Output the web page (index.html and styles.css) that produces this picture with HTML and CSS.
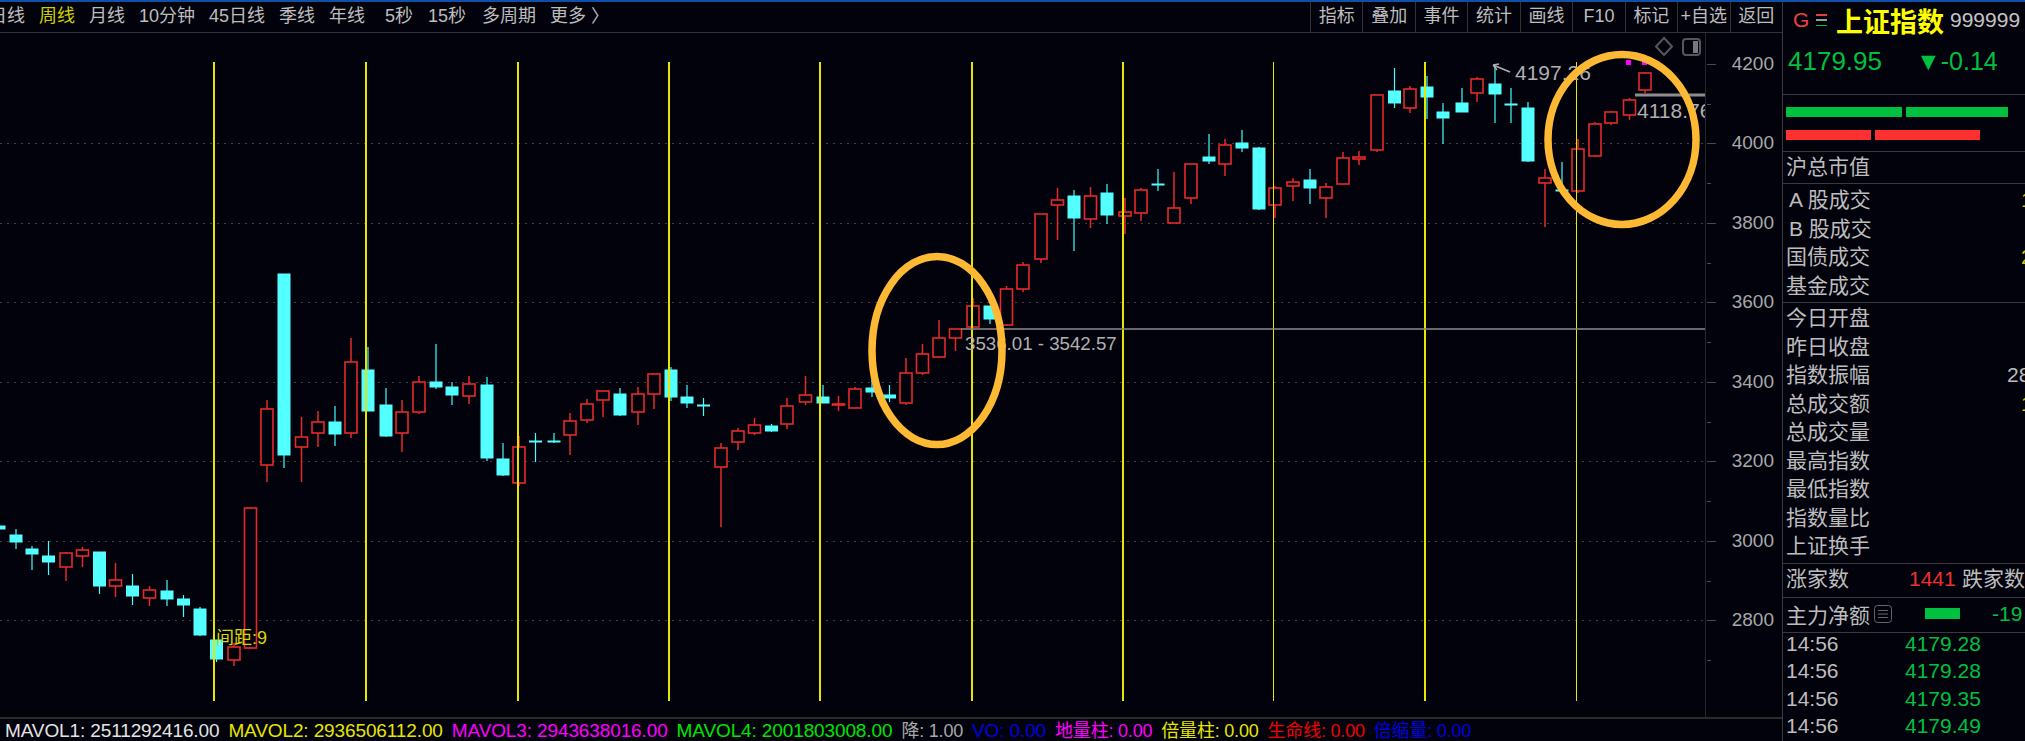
FILE: index.html
```html
<!DOCTYPE html>
<html lang="zh-CN">
<head>
    <meta charset="UTF-8">
    <title>上证指数 周线</title>
    <link rel="stylesheet" href="styles.css">
</head>
<body>
    <div class="main">
        <div class="toolbar">
            <div class="tabs">
                <span class="tab">日线</span>
                <span class="tab active">周线</span>
                <span class="tab">月线</span>
                <span class="tab">10分钟</span>
                <span class="tab">45日线</span>
                <span class="tab">季线</span>
                <span class="tab">年线</span>
                <span class="tab sec-five">5秒</span>
                <span class="tab wide">15秒</span>
                <span class="tab">多周期</span>
                <span class="tab">更多 〉</span>
            </div>
            <div class="tools">
                <span class="tool">指标</span>
                <span class="tool">叠加</span>
                <span class="tool">事件</span>
                <span class="tool">统计</span>
                <span class="tool">画线</span>
                <span class="tool">F10</span>
                <span class="tool">标记</span>
                <span class="tool">+自选</span>
                <span class="tool">返回</span>
            </div>
        </div>

        <svg class="chart" viewBox="0 33 1782 684" xmlns="http://www.w3.org/2000/svg">
            <g id="grid"></g>
            <g id="candles"></g>
            <g id="marks"></g>

            <rect class="dot" x="1626" y="60" width="5" height="5"/>
            <rect class="dot" x="1642" y="60" width="5" height="5"/>
            <path class="note-line" d="M1510 72 L1493 65 M1493 65 L1499 64 M1493 65 L1497 70"/>
            <text class="note" x="1515" y="80">4197.26</text>
            <path class="hi-line" d="M1635 95 H1705"/>
            <svg x="1637" y="98" width="68" height="28"><text class="note" x="0" y="20">4118.76</text></svg>
            <path class="range-line" d="M961 329 H1705"/>
            <text class="note small" x="965" y="350">3536.01 - 3542.57</text>
            <text class="gap-label" x="216" y="644">间距:9</text>

            <ellipse class="ring" cx="937" cy="350.5" rx="65" ry="94"/>
            <ellipse class="ring" cx="1622" cy="139.5" rx="74" ry="85"/>

            <path class="icon-line" d="M1664 38 L1672 46.500 L1664 55 L1656 46.500 Z"/>
            <rect class="icon-line" x="1683" y="39" width="17" height="16" rx="3"/>
            <rect class="icon-fill" x="1693" y="41" width="5" height="12"/>
        </svg>

        <div class="status">
            <span class="white">MAVOL1: 2511292416.00</span>
            <span class="yellow">MAVOL2: 2936506112.00</span>
            <span class="magenta">MAVOL3: 2943638016.00</span>
            <span class="lime">MAVOL4: 2001803008.00</span>
            <span class="gray cn">降: 1.00</span>
            <span class="blue">VO: 0.00</span>
            <span class="magenta cn">地量柱: 0.00</span>
            <span class="yellow cn">倍量柱: 0.00</span>
            <span class="red cn">生命线: 0.00</span>
            <span class="blue cn">倍缩量: 0.00</span>
        </div>
    </div>

    <div class="side">
        <div class="quote">
            <div class="title-row">
                <span class="g-mark">G</span>
                <span class="bars-mark"><i></i><i></i><i></i></span>
                <span class="name">上证指数</span>
                <span class="code">999999</span>
            </div>
            <div class="price-row">
                <span class="price">4179.95</span>
                <span class="change">▼-0.14</span>
            </div>
        </div>

        <div class="meter">
            <div class="meter-row">
                <i class="green-bar first"></i>
                <i class="green-bar second"></i>
            </div>
            <div class="meter-row">
                <i class="red-bar first"></i>
                <i class="red-bar second"></i>
            </div>
        </div>

        <div class="section cap">沪总市值</div>

        <div class="section block-a">
            <div class="row"><span class="indent">A 股成交</span><span class="val far">1</span></div>
            <div class="row"><span class="indent">B 股成交</span></div>
            <div class="row"><span>国债成交</span><span class="val far">2</span></div>
            <div class="row"><span>基金成交</span></div>
        </div>

        <div class="section block-b">
            <div class="row"><span>今日开盘</span></div>
            <div class="row"><span>昨日收盘</span></div>
            <div class="row"><span>指数振幅</span><span class="val near">28</span></div>
            <div class="row"><span>总成交额</span><span class="val far">1</span></div>
            <div class="row"><span>总成交量</span></div>
            <div class="row"><span>最高指数</span></div>
            <div class="row"><span>最低指数</span></div>
            <div class="row"><span>指数量比</span></div>
            <div class="row"><span>上证换手</span></div>
        </div>

        <div class="section breadth">
            <span class="breadth-label">涨家数</span>
            <span class="up-count">1441</span>
            <span>跌家数</span>
        </div>

        <div class="section flow">
            <span>主力净额</span>
            <svg class="list-icon" viewBox="0 0 18 18" xmlns="http://www.w3.org/2000/svg">
                <rect x="0.5" y="0.5" width="17" height="17" rx="3"/>
                <path d="M4 5.500 H14 M4 9 H14 M4 12.500 H14"/>
            </svg>
            <i class="flow-bar"></i>
            <span class="flow-val">-19</span>
        </div>

        <div class="ticks">
            <div class="tick"><span class="time">14:56</span><span class="tick-price">4179.28</span></div>
            <div class="tick"><span class="time">14:56</span><span class="tick-price">4179.28</span></div>
            <div class="tick"><span class="time">14:56</span><span class="tick-price">4179.35</span></div>
            <div class="tick"><span class="time">14:56</span><span class="tick-price">4179.49</span></div>
        </div>
    </div>

    <script src="chart.js"></script>
</body>
</html>
```

FILE: styles.css
```css
html, body {
    height: 100%;
}

body {
    margin: 0;
    display: flex;
    height: 741px;
    overflow: hidden;
    background: #02020c;
    border-top: 2px solid #0f4fa8;
    box-sizing: border-box;
    color: #bdbdbd;
    font-family: "Liberation Sans", "Noto Sans CJK SC", sans-serif;
}

/* left part: toolbar, chart, status line */
.main {
    flex: 0 0 1782px;
    width: 1782px;
    display: flex;
    flex-direction: column;
    overflow: hidden;
}

.toolbar {
    flex: 0 0 30px;
    display: flex;
    justify-content: space-between;
    border-bottom: 1px solid #333;
    font-size: 18px;
    line-height: 28px;
}

.tabs {
    display: flex;
    margin-left: -18px;
    white-space: nowrap;
}

.tab {
    padding: 0 7px;
}

.tab.sec-five {
    padding: 0 6px 0 13px;
}

.tab.wide {
    padding: 0 9px;
}

.tab.active {
    color: #cfcf00;
}

.tools {
    display: grid;
    grid-template-columns: repeat(9, 1fr);
    width: 472px;
}

.tool {
    border-left: 1px solid #333;
    text-align: center;
    white-space: nowrap;
}

.chart {
    display: block;
    flex: 0 0 684px;
    width: 1782px;
    height: 684px;
}

.status {
    flex: 1;
    display: flex;
    gap: 9px;
    padding-left: 5px;
    border-top: 2px solid #2a2a2a;
    font-size: 19px;
    line-height: 24px;
    letter-spacing: -0.12px;
    white-space: nowrap;
}

.status .cn {
    font-size: 18px;
    letter-spacing: -0.2px;
}

.white { color: #e4e4e4; }
.yellow { color: #e6e600; }
.magenta { color: #ff00ff; }
.lime { color: #00e600; }
.gray { color: #a8a8a8; }
.blue { color: #0000e0; }
.red { color: #f00000; }

/* chart parts */
.grid-line {
    stroke: #404040;
    stroke-width: 1;
    stroke-dasharray: 2 5;
}

.axis-line {
    stroke: #26262c;
    stroke-width: 1;
}

.axis-tick {
    stroke: #4a4a4a;
    stroke-width: 1;
}

.axis-label {
    fill: #a8a8a8;
    font-size: 19px;
    text-anchor: end;
}

.wick-up { stroke: #e62a2a; stroke-width: 1.500; }
.wick-down { stroke: #4ff; stroke-width: 1.200; }

.body-up {
    fill: #02020c;
    stroke: #e62a2a;
    stroke-width: 1.600;
}

.body-down { fill: #54ffff; }

.cycle-line { stroke: #e6e600; }

.note {
    fill: #b0b0b0;
    font-size: 21px;
}

.note.small {
    font-size: 18.700px;
}

.note-line {
    fill: none;
    stroke: #b0b0b0;
    stroke-width: 1.500;
}

.hi-line {
    stroke: #8c8c8c;
    stroke-width: 3;
}

.range-line {
    stroke: #8c8c8c;
    stroke-width: 1.500;
}

.gap-label {
    fill: #d8d800;
    font-size: 18px;
}

.ring {
    fill: none;
    stroke: #fdb933;
    stroke-width: 7.500;
}

.dot { fill: #ff00ff; }

.icon-line {
    fill: none;
    stroke: #55555a;
    stroke-width: 2;
}

.icon-fill { fill: #77777c; }

/* right quote panel */
.side {
    flex: 1;
    min-width: 0;
    border-left: 1px solid #3a3a3a;
    overflow: hidden;
    font-size: 21px;
}

.quote {
    height: 93px;
    box-sizing: border-box;
    padding-left: 3px;
    border-bottom: 1px solid #3a3a3a;
}

.title-row {
    display: flex;
    align-items: center;
    height: 36px;
    white-space: nowrap;
}

.g-mark {
    margin-left: 7px;
    width: 23px;
    color: #f04040;
    font-size: 21px;
}

.bars-mark {
    display: flex;
    flex-direction: column;
    justify-content: space-between;
    width: 11px;
    height: 12px;
    margin-right: 9px;
}

.bars-mark i {
    display: block;
    height: 1.500px;
    background: #999;
}

.bars-mark i:first-child { background: #e04040; }
.bars-mark i:last-child { background: #00c040; }

.name {
    width: 114px;
    color: #ffff00;
    font-size: 27px;
    font-weight: bold;
}

.code {
    font-size: 21px;
    color: #c4c4c4;
}

.price-row {
    display: flex;
    align-items: center;
    height: 46px;
    padding-left: 2px;
    color: #00c040;
    white-space: nowrap;
}

.price {
    width: 128px;
    font-size: 26px;
}

.change {
    font-size: 25px;
}

.meter {
    height: 57px;
    box-sizing: border-box;
    padding: 12px 0 0 3px;
    border-bottom: 1px solid #3a3a3a;
}

.meter-row {
    display: flex;
    gap: 4px;
    height: 10px;
    margin-bottom: 13px;
}

.green-bar { background: #00c040; }
.red-bar { background: #ff3030; }

.green-bar.first { width: 116px; }
.green-bar.second { width: 102px; }
.red-bar.first { width: 85px; }
.red-bar.second { width: 105px; }

.section {
    box-sizing: border-box;
    padding-left: 3px;
    border-bottom: 1px solid #3a3a3a;
    white-space: nowrap;
}

.cap {
    height: 32px;
    line-height: 30px;
}

.block-a {
    height: 119px;
    padding-top: 1px;
}

.block-b {
    height: 261px;
}

.row {
    position: relative;
    height: 28.500px;
    line-height: 29px;
}

.indent {
    padding-left: 3px;
}

.val {
    position: absolute;
    top: 0;
}

.val.far {
    left: 235px;
    color: #c8c800;
}

.val.near {
    left: 221px;
}

.breadth {
    display: flex;
    height: 34px;
    line-height: 29px;
}

.breadth-label {
    width: 123px;
}

.up-count {
    width: 53px;
    color: #f03030;
}

.flow {
    display: flex;
    align-items: center;
    height: 35px;
    padding-bottom: 3px;
}

.list-icon {
    width: 18px;
    height: 18px;
    margin-left: 4px;
    fill: none;
    stroke: #66666a;
}

.flow-bar {
    width: 35px;
    height: 11px;
    margin-left: 33px;
    background: #00c040;
}

.flow-val {
    margin-left: 32px;
    color: #00c040;
}

.ticks {
    margin-top: -2px;
    padding-left: 3px;
}

.tick {
    display: flex;
    height: 27.300px;
    line-height: 26px;
}

.time {
    width: 119px;
}

.tick-price {
    color: #00c040;
}
```

FILE: chart.js
```js
// x, high, low, bodyTop, bodyBottom, type
const CANDLES = [
    [-1,526,529,526,529,'d'],[16,529,549,535,542,'d'],[32,546,570,549,554,'d'],[48.5,541,575,556,562,'d'],
    [66,552,581,553,567,'u'],[82.5,547,567,550,556,'u'],[99.5,552,594,552,586,'d'],[115.5,563,597,580,586,'u'],
    [132.5,574,605,586,596,'d'],[149.5,586,606,590,598,'u'],[167,580,606,591,599,'d'],[183.5,595,617,599,605,'d'],
    [200,607,636,609,635,'d'],[216.5,640,662,640,659,'d'],[234,643,666,647,660,'u'],[250.5,507,649,508,648,'u'],
    [267,400,482,409,465,'u'],[284,274,468,274,455,'d'],[301.5,417,482,437,447,'u'],[318,411,447,422,433,'u'],
    [335,406,446,422,434,'d'],[351,338,438,362,433,'u'],[368,347,411,370,411,'d'],[386,388,437,405,436,'d'],
    [402,400,452,412,433,'u'],[419,376,414,382,412,'u'],[436,344,389,382,387,'d'],[452,382,405,387,395,'d'],
    [469,376,404,384,396,'u'],[487,377,461,385,458,'d'],[503,443,476,459,475,'d'],[519,436,486,447,483,'u'],
    [535.5,433,462,441,442,'d'],[554,433,443,441,442,'d'],[570,413,455,421,435,'u'],[587,399,423,404,420,'u'],
    [603,391,417,391,400,'u'],[620,388,416,394,415,'d'],[638,387,425,394,412,'u'],[654,374,409,374,394,'u'],
    [671,367,401,370,397,'d'],[687,385,408,397,403,'d'],[703.5,398,416,405,406,'d'],[721,443,527,448,467,'u'],
    [738,428,450,431,442,'u'],[754.5,418,435,425,433,'u'],[771.5,424,432,426,431,'d'],[787,398,429,406,424,'u'],
    [805.5,376,405,395,402,'u'],[823,385,403,397,403,'d'],[838.5,396,411,404,405,'u'],[855,387,408,389,408,'u'],
    [872,380,397,388,392,'d'],[889.5,385,402,395,398,'d'],[906,358,405,373,403,'u'],[922.5,344,375,354,373,'u'],
    [939,320,358,338,357,'u'],[955.5,329,351,329,338,'u'],[973,298,327,306,327,'u'],[990,306,324,306,319,'d'],
    [1006.5,286,326,289,325,'u'],[1023,262,292,265,289,'u'],[1041,214,263,214,259,'u'],[1057.5,188,240,200,205,'u'],
    [1074,190,251,196,218,'d'],[1090.5,187,228,196,219,'u'],[1107,184,224,193,215,'d'],[1125,198,234,212,216,'u'],
    [1141,188,221,190,213,'u'],[1158,169,191,184,185,'d'],[1174,172,223,208,223,'u'],[1191,164,204,164,198,'u'],
    [1209,134,164,157,161,'d'],[1225,139,176,145,164,'u'],[1242,130,152,143,148,'d'],[1259,147,210,148,209,'d'],
    [1275,186,218,188,205,'u'],[1293,178,201,182,186,'u'],[1310,169,204,180,188,'d'],[1326,183,218,187,198,'u'],
    [1343,152,184,158,184,'u'],[1359,151,165,157,159,'u'],[1377,95,152,95,150,'u'],[1394.5,68,108,91,103,'d'],
    [1410,86,113,89,108,'u'],[1427,76,119,87,97,'d'],[1443,103,144,112,118,'d'],[1462,88,112,103,112,'d'],
    [1477,77,102,79,93,'u'],[1495,67,123,84,94,'d'],[1511,88,123,104,105,'d'],[1528,102,162,108,161,'d'],
    [1545,169,227,178,183,'u'],[1562,162,192,190,191,'d'],[1578,139,193,149,191,'u'],[1595,122,157,124,156,'u'],
    [1611,111,125,112,123,'u'],[1629.5,98,120,100,115,'u'],[1645,72,93,73,90,'u']
];

const CYCLE_LINES = [[214,2],[366,2],[518,2],[669,2],[820,2],[972,2],[1123,2],[1273.5,1],[1425,2],[1576.5,1]];
const PRICE_LABELS = [4200,4000,3800,3600,3400,3200,3000,2800];
const SVG_NS = 'http://www.w3.org/2000/svg';

function add(parent, tag, attrs, text) {
    const el = document.createElementNS(SVG_NS, tag);
    for (const key in attrs) el.setAttribute(key, attrs[key]);
    if (text) el.textContent = text;
    parent.appendChild(el);
    return el;
}

function priceY(price) {
    return 63.5 + (4200 - price) * 0.3975;
}

const grid = document.getElementById('grid');
add(grid, 'line', { class: 'axis-line', x1: 1705.5, x2: 1705.5, y1: 33, y2: 717 });

PRICE_LABELS.forEach(price => {
    const y = Math.round(priceY(price)) + 0.5;
    if (price < 4200) add(grid, 'line', { class: 'grid-line', x1: 0, x2: 1705, y1: y, y2: y });
    add(grid, 'line', { class: 'axis-tick', x1: 1707, x2: 1716, y1: y, y2: y });
    add(grid, 'line', { class: 'axis-tick', x1: 1707, x2: 1711, y1: y + 40, y2: y + 40 });
    add(grid, 'text', { class: 'axis-label', x: 1774, y: y + 5 }, String(price));
});

const candles = document.getElementById('candles');
CANDLES.forEach(([x, high, low, top, bottom, type]) => {
    const up = type === 'u';
    add(candles, 'line', { class: up ? 'wick-up' : 'wick-down', x1: x, x2: x, y1: high, y2: low });
    if (up) {
        add(candles, 'rect', { class: 'body-up', x: x - 6, y: top, width: 12, height: bottom - top });
    } else {
        add(candles, 'rect', { class: 'body-down', x: x - 6.5, y: top - 0.5, width: 13, height: bottom - top + 1 });
    }
});

const marks = document.getElementById('marks');
CYCLE_LINES.forEach(([x, width]) => {
    add(marks, 'line', { class: 'cycle-line', x1: x, x2: x, y1: 62, y2: 701, 'stroke-width': width });
});
```
